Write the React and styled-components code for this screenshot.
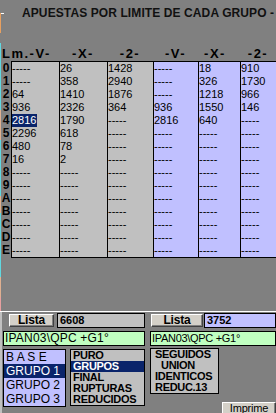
import React from 'react'
import styled, { createGlobalStyle } from 'styled-components'

const GlobalStyle = createGlobalStyle`
  html, body {
    margin: 0;
    padding: 0;
    background: #808080;
  }
  body {
    font-family: "Liberation Sans", Arial, sans-serif;
  }
`

const COLS = '48px 48px 46px 45px 42px 36px'
const GRAY = '#c0c0c0'
const BLUE = '#c0c0ff'
const NAVY = '#0a246a'

const dash = '-----'
const fill = (list, n = 15) => [...list, ...Array(n - list.length).fill(dash)]

const columns = [
  { bg: GRAY, cells: fill([dash, dash, '64', '936', '2816', '2296', '480', '16']), hl: 4 },
  { bg: GRAY, cells: fill(['26', '358', '1410', '2326', '1790', '618', '78', '2']) },
  { bg: GRAY, cells: fill(['1428', '2940', '1876', '364']) },
  { bg: BLUE, cells: fill([dash, dash, dash, '936', '2816']) },
  { bg: BLUE, cells: fill(['18', '326', '1218', '1550', '640']) },
  { bg: BLUE, cells: fill(['910', '1730', '966', '146']) },
]

const labels = '0123456789ABCDE'.split('')

const Screen = styled.div`
  width: 276px;
  height: 413px;
  overflow: hidden;
  background: #808080;
  display: flex;
  flex-direction: column;
`

const Top = styled.div`
  display: flex;
  height: 311px;
  flex: none;
`

const Strip = styled.div`
  width: 1px;
  flex: none;
  background: linear-gradient(
    to bottom,
    #808080 0 13px,
    #e8a060 13px 33px,
    #808080 33px 43px,
    #60d8e0 43px 110px,
    #e0b090 110px 140px,
    #60d8e0 140px 196px,
    #e0b090 196px 213px,
    #60d8e0 213px 277px,
    #e0b090 277px 297px,
    #e8a0a0 297px 311px
  );
`

const Sheet = styled.div`
  flex: 1;
  display: flex;
  flex-direction: column;
`

const TitleRow = styled.div`
  height: 26px;
  display: flex;
  align-items: center;
`

const TitleDash = styled.span`
  width: 3px;
  height: 1px;
  background: #ffffff;
  flex: none;
`

const Title = styled.div`
  margin-left: 18px;
  font-size: 12px;
  font-weight: bold;
  letter-spacing: 0.1px;
  color: #111;
  white-space: nowrap;
  overflow: hidden;
`

const HeaderRow = styled.div`
  margin-top: 20px;
  height: 15px;
  display: grid;
  grid-template-columns: 10px ${COLS};
  font-size: 13px;
  font-weight: bold;
  letter-spacing: 1.5px;
  line-height: 15px;
  color: #000;
`

const Head = styled.div`
  grid-column: ${p => p.$span ? `span ${p.$span}` : 'auto'};
  text-align: ${p => p.$left ? 'left' : 'center'};
  padding-left: ${p => p.$left ? '1px' : '0'};
  padding-right: ${p => p.$shift || 0}px;
  white-space: nowrap;
`

const Body = styled.div`
  display: flex;
`

const Labels = styled.div`
  width: 10px;
  padding-top: 1px;
  display: flex;
  flex-direction: column;
`

const Label = styled.div`
  height: 13px;
  line-height: 13px;
  font-size: 12px;
  font-weight: bold;
  text-align: center;
  color: #000;
`

const Table = styled.div`
  display: grid;
  grid-template-columns: ${COLS};
  border-top: 1px solid #000;
  border-bottom: 1px solid #000;
`

const Column = styled.div`
  display: flex;
  flex-direction: column;
  background: ${p => p.$bg};
  border-left: 1px solid #000;
`

const Cell = styled.div`
  height: 13px;
  line-height: 13px;
  font-size: 11px;
  color: #000;
  white-space: nowrap;
  overflow: hidden;
`

const Mark = styled.span`
  background: ${NAVY};
  color: #fff;
  padding: 1px 1px 1px 0;
`

const Divider = styled.div`
  height: 1px;
  background: #ffffff;
  flex: none;
`

const Bottom = styled.div`
  flex: 1;
  display: flex;
  gap: 5px;
  border-left: 2px solid #c0c0c0;
  padding-left: 1px;
`

const Half = styled.div`
  width: ${p => p.$w}px;
  display: flex;
  flex-direction: column;
  padding-top: 1px;
`

const ListaRow = styled.div`
  display: flex;
  align-items: flex-start;
  height: 15px;
  padding-left: ${p => p.$pad}px;
  gap: ${p => p.$gap}px;
`

const WinButton = styled.div`
  box-sizing: border-box;
  width: ${p => p.$w}px;
  height: ${p => p.$h}px;
  margin-top: ${p => p.$top || 0}px;
  margin-left: ${p => p.$left || 0}px;
  flex: none;
  background: #d4d0c8;
  border-top: 1px solid #ffffff;
  border-left: 1px solid #ffffff;
  border-right: 1px solid #404040;
  border-bottom: 1px solid #404040;
  box-shadow: inset -1px -1px 0 #808080;
  text-align: center;
  font-size: ${p => p.$size}px;
  font-weight: ${p => p.$bold ? 'bold' : 'normal'};
  line-height: 11px;
  letter-spacing: -0.2px;
  color: #000;
`

const ValueBox = styled.div`
  box-sizing: border-box;
  flex: 1;
  height: 15px;
  border: 1px solid #000;
  background: ${p => p.$bg};
  padding-left: 2px;
  font-size: 11px;
  font-weight: bold;
  line-height: 13px;
  color: #000;
`

const PathBox = styled.div`
  box-sizing: border-box;
  margin-top: 3px;
  height: 15px;
  border: 1px solid #000;
  background: #c0ffc0;
  padding-left: 1px;
  font-size: ${p => p.$size}px;
  letter-spacing: ${p => p.$ls}px;
  line-height: 13px;
  color: #000;
  white-space: nowrap;
  overflow: hidden;
`

const Lower = styled.div`
  margin-top: ${p => p.$top}px;
  display: flex;
  align-items: flex-start;
  gap: ${p => p.$gap || 0}px;
`

const ListBox = styled.div`
  width: ${p => p.$w}px;
  box-sizing: border-box;
  flex: none;
  border: 1px solid #000;
  background: ${p => p.$bg};
  display: flex;
  flex-direction: column;
`

const Item = styled.div`
  height: ${p => p.$h}px;
  line-height: ${p => p.$h}px;
  padding-left: ${p => p.$pad}px;
  font-size: ${p => p.$size}px;
  font-weight: ${p => p.$bold ? 'bold' : 'normal'};
  letter-spacing: ${p => p.$bold ? '-0.3px' : '0'};
  background: ${p => p.$sel ? NAVY : 'transparent'};
  color: ${p => p.$sel ? '#fff' : '#000'};
  white-space: pre;
  overflow: hidden;
`

const App = () => (
  <Screen>
    <GlobalStyle />
    <Top>
      <Strip />
      <Sheet>
        <TitleRow>
          <TitleDash />
          <Title>APUESTAS POR LIMITE DE CADA GRUPO -</Title>
        </TitleRow>
        <HeaderRow>
          <Head $span={2} $left>Lm.-V-</Head>
          <Head>-X-</Head>
          <Head>-2-</Head>
          <Head>-V-</Head>
          <Head $shift={8}>-X-</Head>
          <Head>-2-</Head>
        </HeaderRow>
        <Body>
          <Labels>
            {labels.map(l => <Label key={l}>{l}</Label>)}
          </Labels>
          <Table>
            {columns.map((col, ci) => (
              <Column key={ci} $bg={col.bg}>
                {col.cells.map((c, ri) => (
                  <Cell key={ri}>
                    {col.hl === ri ? <Mark>{c}</Mark> : c}
                  </Cell>
                ))}
              </Column>
            ))}
          </Table>
        </Body>
      </Sheet>
    </Top>
    <Divider />
    <Bottom>
      <Half $w={142}>
        <ListaRow $pad={6} $gap={3}>
          <WinButton $w={45} $h={13} $top={1} $size={12} $bold>Lista</WinButton>
          <ValueBox $bg={GRAY}>6608</ValueBox>
        </ListaRow>
        <PathBox $size={12} $ls={0.2}>IPAN03\QPC +G1°</PathBox>
        <Lower $top={3} $gap={4}>
          <ListBox $w={63} $bg={BLUE}>
            <Item $h={14} $pad={2} $size={12}>B A S E</Item>
            <Item $h={14} $pad={2} $size={12} $sel>GRUPO 1</Item>
            <Item $h={14} $pad={2} $size={12}>GRUPO 2</Item>
            <Item $h={14} $pad={2} $size={12}>GRUPO 3</Item>
          </ListBox>
          <ListBox $w={75} $bg={GRAY}>
            <Item $h={11} $pad={2} $size={11} $bold>PURO</Item>
            <Item $h={11} $pad={2} $size={11} $bold $sel>GRUPOS</Item>
            <Item $h={11} $pad={2} $size={11} $bold>FINAL</Item>
            <Item $h={11} $pad={2} $size={11} $bold>RUPTURAS</Item>
            <Item $h={11} $pad={2} $size={11} $bold>REDUCIDOS</Item>
          </ListBox>
        </Lower>
      </Half>
      <Half $w={126}>
        <ListaRow $pad={1} $gap={1}>
          <WinButton $w={52} $h={13} $top={1} $size={12} $bold>Lista</WinButton>
          <ValueBox $bg={BLUE}>3752</ValueBox>
        </ListaRow>
        <PathBox $size={11} $ls={-0.3}>IPAN03\QPC +G1°</PathBox>
        <Lower $top={2}>
          <ListBox $w={69} $bg={GRAY}>
            <Item $h={11} $pad={4} $size={11} $bold>SEGUIDOS</Item>
            <Item $h={11} $pad={10} $size={11} $bold>UNION</Item>
            <Item $h={11} $pad={4} $size={11} $bold>IDENTICOS</Item>
            <Item $h={11} $pad={4} $size={11} $bold>REDUC.13</Item>
          </ListBox>
          <WinButton $w={54} $h={16} $top={54} $left={3} $size={11}>Imprime</WinButton>
        </Lower>
      </Half>
    </Bottom>
  </Screen>
)

export default App
